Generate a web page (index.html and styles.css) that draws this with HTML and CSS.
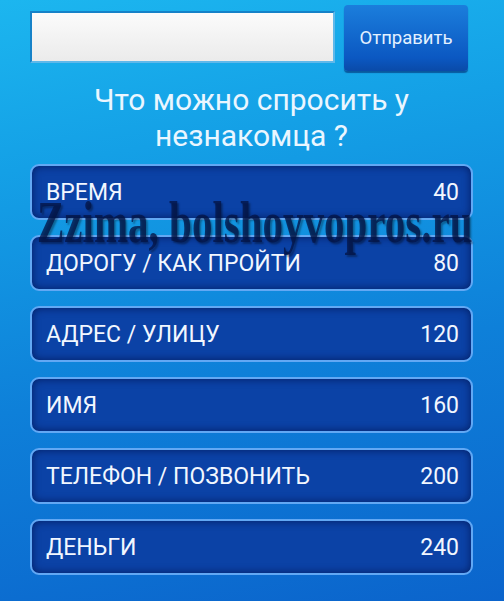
FILE: index.html
```
<!DOCTYPE html>
<html lang="ru">
<head>
<meta charset="utf-8">
<link rel="stylesheet" href="styles.css">
</head>
<body>
<div class="page">
  <div class="top">
    <div class="field"></div>
    <div class="send">Отправить</div>
  </div>
  <h1 class="title">Что можно спросить у<br>незнакомца ?</h1>
  <div class="list">
    <div class="row"><span>ВРЕМЯ</span><span>40</span></div>
    <div class="row"><span>ДОРОГУ / КАК ПРОЙТИ</span><span>80</span></div>
    <div class="row"><span>АДРЕС / УЛИЦУ</span><span>120</span></div>
    <div class="row"><span>ИМЯ</span><span>160</span></div>
    <div class="row"><span>ТЕЛЕФОН / ПОЗВОНИТЬ</span><span>200</span></div>
    <div class="row"><span>ДЕНЬГИ</span><span>240</span></div>
  </div>
  <div class="mark">Zzima, bolshoyvopros.ru</div>
</div>
</body>
</html>
```
FILE: styles.css
```
html, body {
  margin: 0;
  padding: 0;
}
body {
  width: 504px;
  height: 601px;
  overflow: hidden;
  font-family: Roboto, "Noto Sans", sans-serif;
}
.page {
  position: relative;
  width: 504px;
  height: 601px;
  background: linear-gradient(170deg, #1cb6ef 0%, #14a0e6 25%, #0e80d9 60%, #0b64cc 100%);
  padding: 5px 31px 0 30px;
  box-sizing: border-box;
}
.top {
  display: flex;
  align-items: flex-start;
  gap: 9px;
}
.field {
  margin-top: 6px;
  width: 305px;
  height: 52px;
  background: linear-gradient(#fbfbfb, #ebebeb);
  border: 2px solid #1682c8;
  border-bottom-color: #5fb8ea;
  border-right-color: #5fb8ea;
  box-sizing: border-box;
}
.send {
  width: 124px;
  height: 66px;
  border-radius: 4px;
  background: linear-gradient(#1b7edc, #0b58c2 80%, #0a4aa8);
  box-shadow: 0 2px 1px rgba(0, 40, 110, 0.6);
  color: #e3f1ff;
  font-size: 18.5px;
  display: flex;
  align-items: center;
  justify-content: center;
}
.title {
  margin: 11px 0 0;
  font-weight: normal;
  font-size: 30px;
  line-height: 36px;
  color: #eaf6ff;
  text-align: center;
}
.list {
  margin-top: 10px;
  display: flex;
  flex-direction: column;
  gap: 15px;
}
.row {
  height: 56px;
  box-sizing: border-box;
  border: 2px solid #62a8f4;
  border-radius: 9px;
  background: #0b42a6;
  box-shadow: inset 0 0 9px rgba(0, 20, 80, 0.8);
  display: flex;
  align-items: center;
  justify-content: space-between;
  padding: 0 12px 0 14px;
  color: #f2f7ff;
  font-size: 23px;
}
.mark {
  position: absolute;
  left: 37px;
  top: 188px;
  font-family: "Liberation Serif", serif;
  font-weight: bold;
  font-size: 50px;
  line-height: 56px;
  color: rgba(4, 20, 70, 0.78);
  text-shadow: 2px 2px 2px rgba(0, 0, 0, 0.35);
  transform-origin: left top;
  transform: scale(0.82, 1.2);
  white-space: nowrap;
  pointer-events: none;
}
```
